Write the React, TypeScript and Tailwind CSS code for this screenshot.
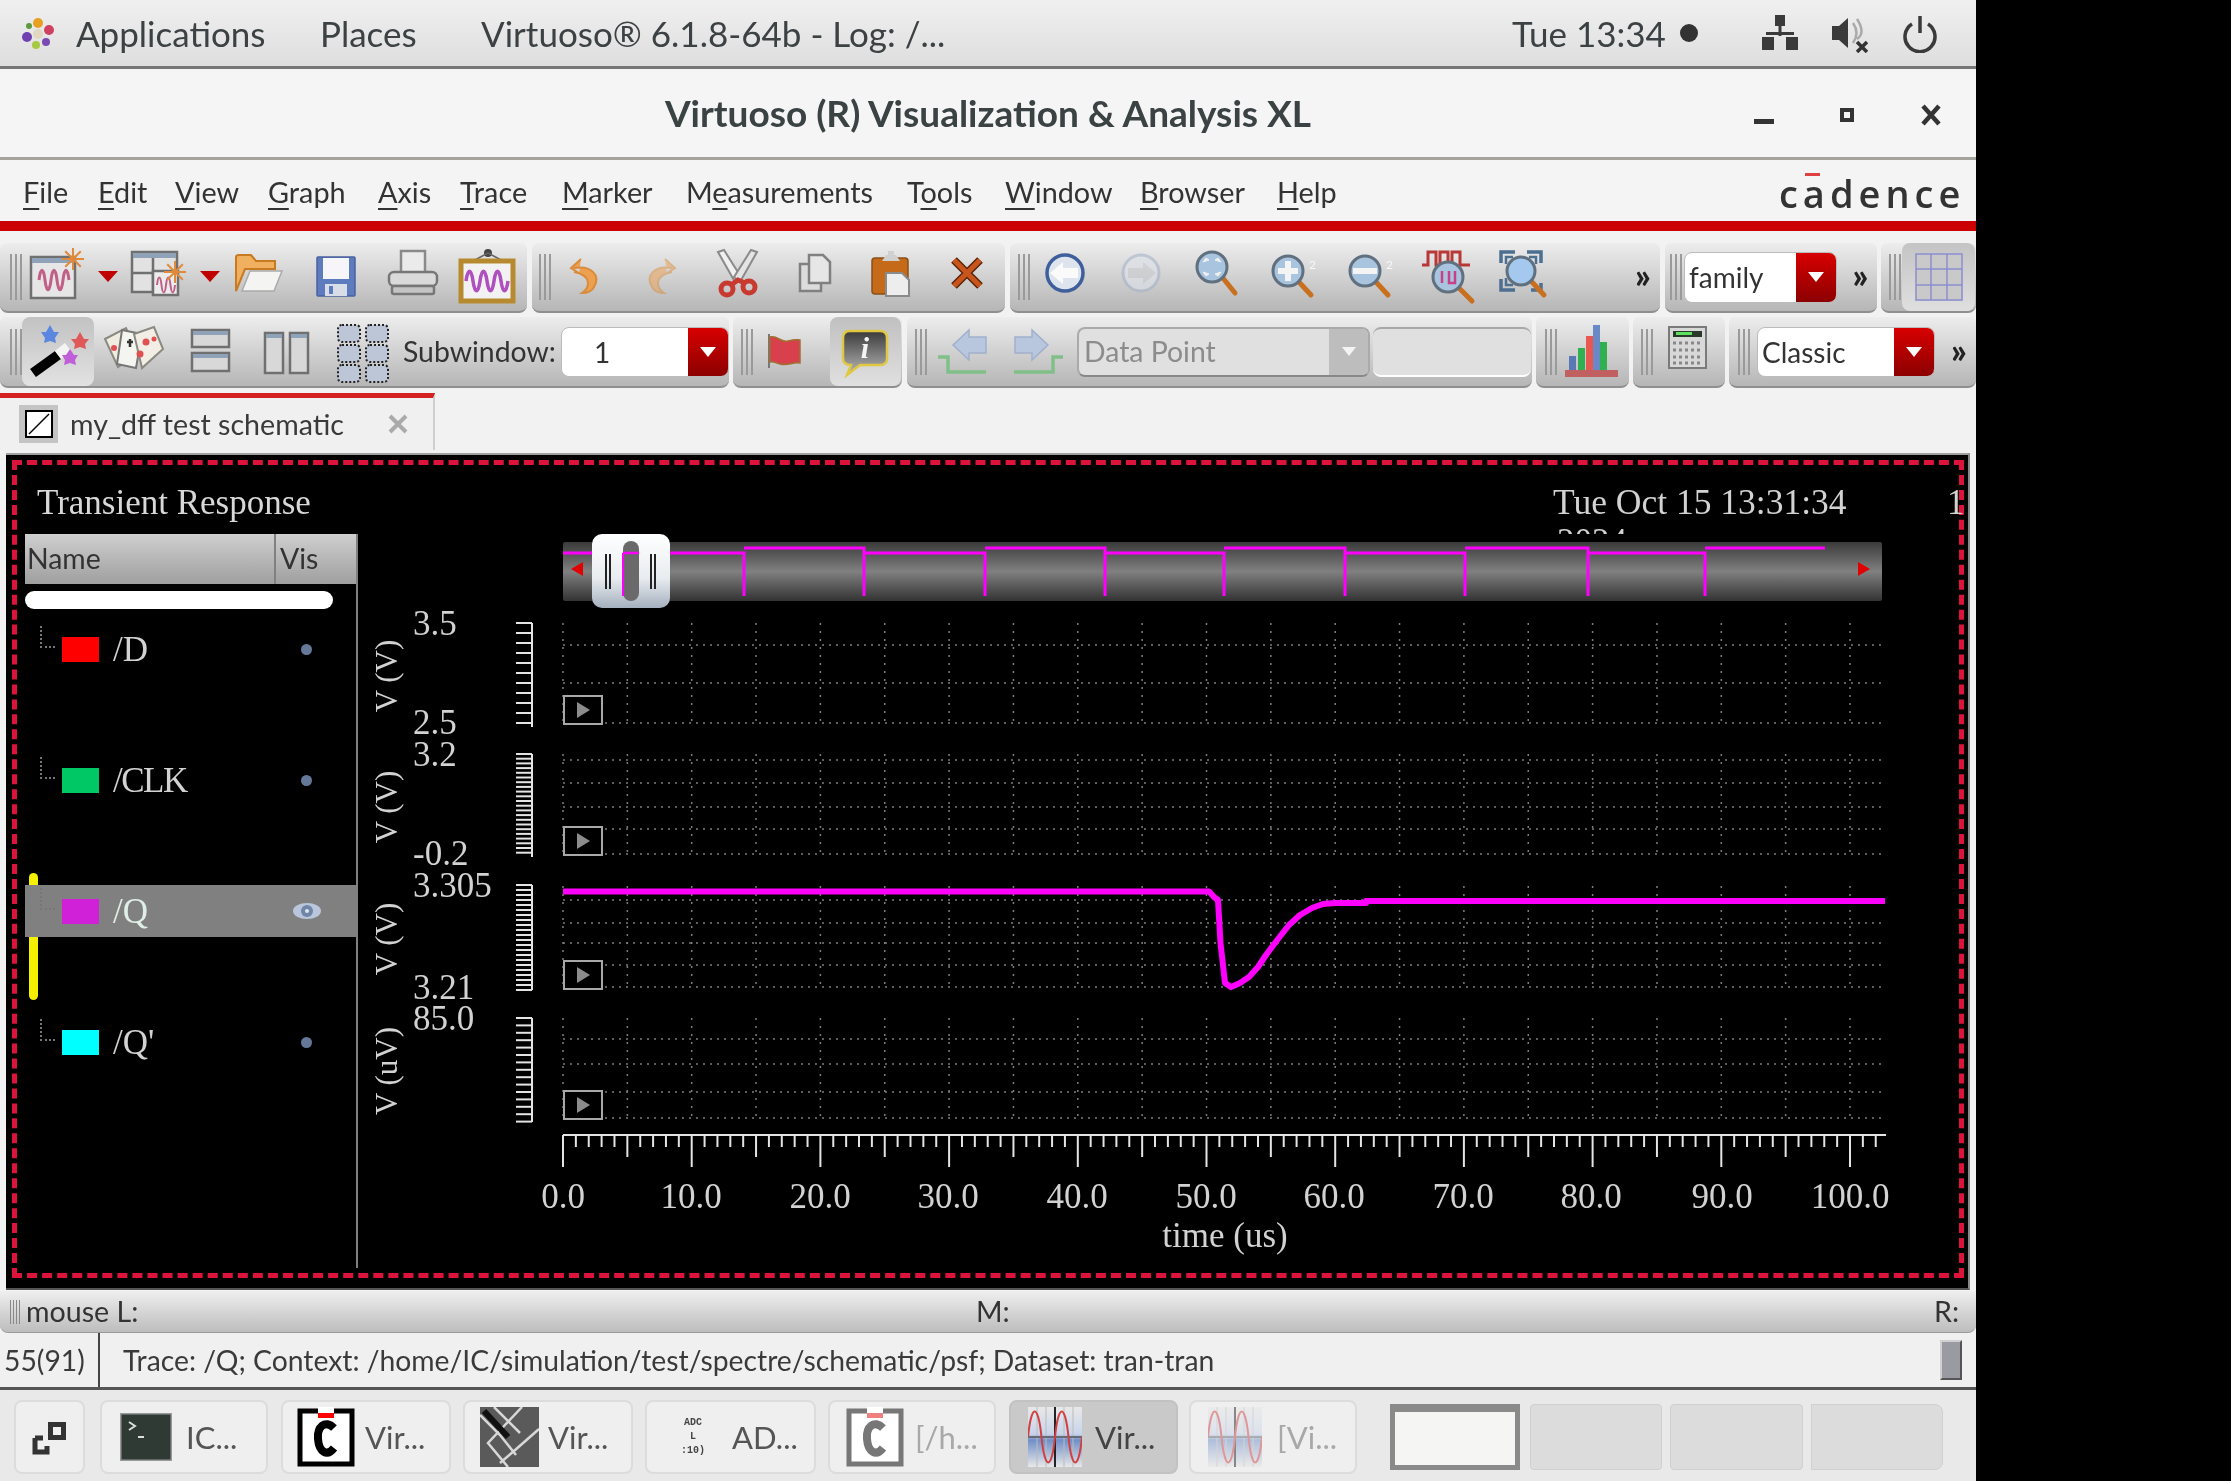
import React from "react";

const wave = (x0: number, y: number, n: number, w: number, a: number) => {
  let d = `M${x0} ${y}`;
  let x = x0;
  for (let i = 0; i < n; i++) {
    const s = i % 2 === 0 ? -1 : 1;
    d += ` C${x + w * 0.25} ${y + s * a} ${x + w * 0.75} ${y + s * a} ${x + w} ${y}`;
    x += w;
  }
  return d;
};

function Ic({ children, cls = "" }: { children?: React.ReactNode; cls?: string }) {
  return (
    <svg viewBox="0 0 48 60" className={`w-12 h-[60px] overflow-visible shrink-0 ${cls}`}>
      {children}
    </svg>
  );
}

function Spark({ x, y }: { x: number; y: number }) {
  const rays = [0, 45, 90, 135, 180, 225, 270, 315];
  return (
    <g stroke="#e08a3c" strokeWidth="2">
      {rays.map((a) => (
        <line key={a} x1={x} y1={y} x2={x + 11 * Math.cos((a * Math.PI) / 180)} y2={y + 11 * Math.sin((a * Math.PI) / 180)} />
      ))}
    </g>
  );
}

const Drop = ({ cls }: { cls: string }) => (
  <Ic cls={cls}>
    <polygon points="14,24 34,24 24,35" fill="#c00000" />
  </Ic>
);

function Mag({ cx, cy, hx, hy, r = 15, fill = "#a9c4de", children }: { cx: number; cy: number; hx: number; hy: number; r?: number; fill?: string; children?: React.ReactNode }) {
  return (
    <>
      <line x1={cx + r * 0.7} y1={cy + r * 0.7} x2={hx} y2={hy} stroke="#c8701f" strokeWidth="5" strokeLinecap="round" />
      <circle cx={cx} cy={cy} r={r} fill={fill} stroke="#60707e" strokeWidth="3" />
      {children}
    </>
  );
}

const Grip = ({ cls = "" }: { cls?: string }) => (
  <div className={`flex gap-[3px] h-[46px] w-[13px] shrink-0 ${cls}`}>
    <div className="w-[2px] h-full bg-[#9a9a9a]" />
    <div className="w-[2px] h-full bg-[#9a9a9a]" />
    <div className="w-[2px] h-full bg-[#9a9a9a]" />
  </div>
);

const Chev = ({ cls }: { cls: string }) => (
  <div className={`text-[34px] font-black leading-none text-[#222] text-center pb-[4px] ${cls}`}>»</div>
);

function Group({ cls, children }: { cls: string; children?: React.ReactNode }) {
  return (
    <div className={`flex items-center shrink-0 rounded-t-md rounded-b-lg border-b-2 border-[#8f8f8f] bg-gradient-to-b from-[#ededed] to-[#b6b6b6] ${cls}`}>
      {children}
    </div>
  );
}

function Combo({ cls, dcls, text, tcls }: { cls: string; dcls: string; text: string; tcls: string }) {
  return (
    <div className={`flex shrink-0 rounded-lg border border-[#bbb] bg-white overflow-hidden ${cls}`}>
      <div className={`flex-1 flex items-center text-[28px] text-[#333] ${tcls}`}>{text}</div>
      <div className={`flex items-center justify-center bg-gradient-to-b from-[#d80000] to-[#8c0000] ${dcls}`}>
        <svg width="16" height="10" viewBox="0 0 16 10">
          <polygon points="0,0 16,0 8,10" fill="#fff" />
        </svg>
      </div>
    </div>
  );
}

function MenuItem({ w, a = "", u, b }: { w: string; a?: string; u: string; b: string }) {
  return (
    <div className={`shrink-0 whitespace-nowrap ${w}`}>
      {a}
      <span className="underline decoration-2 underline-offset-[5px]">{u}</span>
      {b}
    </div>
  );
}

function TaskBtn({ cls, active, children }: { cls: string; active?: boolean; children?: React.ReactNode }) {
  return (
    <div className={`flex items-center h-[74px] shrink-0 rounded-lg border-2 ${active ? "bg-[#c9c9c9] border-[#c2c2c2] text-[#444]" : "bg-[#efefef] border-[#dcdcdc] text-[#555]"} ${cls}`}>
      {children}
    </div>
  );
}

const CDoc = ({ light }: { light?: boolean }) => {
  const c = light ? "#777" : "#000";
  return (
    <svg viewBox="0 0 58 60" className="w-[58px] h-[60px] shrink-0">
      <rect x="3" y="4" width="52" height="53" fill="#fff" stroke={c} strokeWidth="5" />
      <rect x="21" y="0" width="16" height="8" fill="#fff" />
      <rect x="21" y="6" width="16" height="5" fill={light ? "#f08080" : "#f00"} />
      <path d="M37 21 C28 12 20 20 21 32 C22 45 30 50 37 41" fill="none" stroke={c} strokeWidth="8" />
    </svg>
  );
};

const WaveTask = ({ light }: { light?: boolean }) => (
  <svg viewBox="0 0 54 60" className={`w-[54px] h-[60px] shrink-0 ${light ? "opacity-50" : ""}`}>
    <defs>
      <linearGradient id={light ? "wt2" : "wt1"} x1="0" y1="0" x2="0" y2="1">
        <stop offset="0" stopColor="#e8e8e8" />
        <stop offset="0.45" stopColor="#c8d4ec" />
        <stop offset="0.55" stopColor="#6f8fc8" />
        <stop offset="1" stopColor="#e8e8e8" />
      </linearGradient>
    </defs>
    <rect width="54" height="60" fill={`url(#${light ? "wt2" : "wt1"})`} />
    {[9, 18, 36, 45].map((x) => (
      <line key={x} x1={x} x2={x} y1="0" y2="60" stroke="#bbb" />
    ))}
    <line x1="27" x2="27" y1="0" y2="60" stroke="#222" strokeWidth="2" />
    <line x1="0" x2="54" y1="30" y2="30" stroke="#555" strokeWidth="1.5" />
    <path d={wave(0, 30, 4, 13.5, 34)} fill="none" stroke="#d04040" strokeWidth="2" />
  </svg>
);

function Chart() {
  const panels = [
    { t: 623, b: 723, h: [645, 683, 723] },
    { t: 754, b: 854, h: [760, 783, 807, 829, 854] },
    { t: 886, b: 987, h: [900, 923, 943, 965, 987] },
    { t: 1018, b: 1118, h: [1039, 1064, 1092, 1118] },
  ];
  const rulers = [
    { t: 623, b: 727, s: 10 },
    { t: 754, b: 857, s: 4.7 },
    { t: 885, b: 990, s: 5 },
    { t: 1018, b: 1122, s: 7.4 },
  ];
  const edges = [744, 864, 985, 1105, 1224, 1345, 1465, 1588, 1705, 1825];
  let trace = "M563 553 H744 V596";
  edges.forEach((x, i) => {
    if (i === edges.length - 1) return;
    const y = i % 2 === 0 ? 548 : 553;
    trace += ` M${x} ${y} H${edges[i + 1]}`;
    if (i < edges.length - 2) trace += " V596";
  });
  const serif = "'Liberation Serif', serif";
  const tx = { fill: "#d2d2d2", fontFamily: serif, fontSize: 35 };
  const nums: [string, number][] = [
    ["3.5", 635],
    ["2.5", 734],
    ["3.2", 766],
    ["-0.2", 865],
    ["3.305", 897],
    ["3.21", 999],
    ["85.0", 1030],
  ];
  const xl: [string, number][] = [
    ["0.0", 563],
    ["10.0", 691],
    ["20.0", 820],
    ["30.0", 948],
    ["40.0", 1077],
    ["50.0", 1206],
    ["60.0", 1334],
    ["70.0", 1463],
    ["80.0", 1591],
    ["90.0", 1722],
    ["100.0", 1850],
  ];
  return (
    <svg viewBox="358 465 1601 808" className="w-[1601px] h-[808px] shrink-0 overflow-visible">
      <defs>
        <linearGradient id="ov" x1="0" y1="0" x2="0" y2="1">
          <stop offset="0" stopColor="#3a3a3a" />
          <stop offset="0.5" stopColor="#808080" />
          <stop offset="1" stopColor="#333" />
        </linearGradient>
        <linearGradient id="hd" x1="0" y1="0" x2="0" y2="1">
          <stop offset="0" stopColor="#ffffff" />
          <stop offset="0.6" stopColor="#e8ecf0" />
          <stop offset="1" stopColor="#a4b0be" />
        </linearGradient>
        <clipPath id="yr">
          <rect x="1500" y="465" width="400" height="69" />
        </clipPath>
      </defs>

      <text x="1553" y="514" {...tx} fontSize="35.5">Tue Oct 15 13:31:34</text>
      <text x="1557" y="553" {...tx} clipPath="url(#yr)">2024</text>
      <text x="1947" y="514" {...tx}>1</text>

      <rect x="563" y="542" width="1319" height="59" rx="2" fill="url(#ov)" />
      <path d={trace} fill="none" stroke="#ff00ff" strokeWidth="3" />
      <polygon points="571,569 583,562 583,576" fill="#e00000" />
      <polygon points="1870,569 1858,562 1858,576" fill="#e00000" />
      <rect x="592" y="534" width="78" height="74" rx="10" fill="url(#hd)" />
      <rect x="623" y="541" width="16" height="60" rx="8" fill="#6a6a6a" />
      <line x1="623" x2="639" y1="553" y2="553" stroke="#ff00ff" strokeWidth="2.5" />
      <line x1="623" x2="623" y1="553" y2="596" stroke="#ff00ff" strokeWidth="2" />
      {[606, 610, 651, 655].map((x) => (
        <line key={x} x1={x} x2={x} y1="554" y2="589" stroke="#222" strokeWidth="2" />
      ))}

      {panels.map((p) => (
        <g key={p.t} stroke="#7c7c7c" strokeWidth="1.5">
          {Array.from({ length: 21 }, (_, i) => 563 + 64.35 * i).map((x) => (
            <line key={x} x1={x} x2={x} y1={p.t} y2={p.b} strokeDasharray="2 6" />
          ))}
          {p.h.map((y) => (
            <line key={y} x1="563" x2="1885" y1={y} y2={y} strokeDasharray="2 5" />
          ))}
        </g>
      ))}

      {rulers.map((r) => (
        <g key={r.t} stroke="#e4e4e4" strokeWidth="2">
          <line x1="532" x2="532" y1={r.t} y2={r.b} />
          {Array.from({ length: Math.floor((r.b - r.t) / r.s) + 1 }, (_, i) => r.t + i * r.s).map((y) => (
            <line key={y} x1="516" x2="532" y1={y} y2={y} />
          ))}
        </g>
      ))}

      {[696, 827, 961, 1091].map((y) => (
        <g key={y}>
          <rect x="564" y={y} width="38" height="28" fill="#000" stroke="#a8a8a8" strokeWidth="2" />
          <polygon points={`577,${y + 6} 590,${y + 14} 577,${y + 22}`} fill="#8c8c8c" />
        </g>
      ))}

      <polyline
        points="563,891.5 1209,891.5 1214,897 1218,900 1220.5,943 1225,983 1231,987 1240,983 1249,977 1258,967 1266,955 1278,939 1289,925 1300,915 1312,908 1323,904 1335,903 1366,903 1366,901 1885,901"
        fill="none"
        stroke="#ff00ff"
        strokeWidth="6"
        strokeLinejoin="round"
      />

      <g stroke="#e4e4e4" strokeWidth="2">
        <line x1="563" x2="1886" y1="1135" y2="1135" />
        {Array.from({ length: 103 }, (_, i) => i).map((i) => (
          <line key={i} x1={563 + 12.87 * i} x2={563 + 12.87 * i} y1="1135" y2={i % 10 === 0 ? 1167 : i % 5 === 0 ? 1157 : 1147} />
        ))}
      </g>

      {nums.map(([t, y]) => (
        <text key={t} x="413" y={y} {...tx}>{t}</text>
      ))}
      {xl.map(([t, x]) => (
        <text key={t} x={x} y="1208" textAnchor="middle" {...tx}>{t}</text>
      ))}
      <text x="1225" y="1247" textAnchor="middle" {...tx}>time (us)</text>

      {[
        ["V (V)", 676],
        ["V (V)", 807],
        ["V (V)", 939],
        ["V (uV)", 1071],
      ].map(([t, y]) => (
        <text key={String(y)} x="0" y="0" textAnchor="middle" transform={`translate(397 ${y}) rotate(-90)`} fill="#d2d2d2" fontFamily={serif} fontSize="31">
          {t}
        </text>
      ))}
    </svg>
  );
}

function Row({ color, label, active, eye, cls = "" }: { color: string; label: string; active?: boolean; eye?: boolean; cls?: string }) {
  return (
    <div className={`relative flex h-[52px] mb-[79px] ${active ? "bg-[#808080]" : ""}`}>
      <div className="self-start mt-[3px] ml-[15px] w-[15px] h-[22px] border-l-2 border-b-2 border-dotted border-[#777]" />
      <div className="self-center ml-[7px] w-[37px] h-[25px] shrink-0" style={{ backgroundColor: color }} />
      <div className={`self-center ml-[14px] text-[35px] leading-none ${active ? "text-[#dfeee6]" : "text-[#d2d2d2]"} ${cls}`}>{label}</div>
      {eye ? (
        <svg viewBox="0 0 30 20" className="self-center ml-auto mr-[34px] w-[30px] h-[20px]">
          <ellipse cx="15" cy="10" rx="14" ry="8" fill="#b9c6dc" />
          <circle cx="15" cy="10" r="6" fill="#6f86a8" />
          <circle cx="15" cy="10" r="2" fill="#dfe6f0" />
        </svg>
      ) : (
        <div className="self-center ml-auto mr-[44px] w-[11px] h-[11px] rounded-full bg-[#66789a]" />
      )}
    </div>
  );
}

export default function App() {
  return (
    <div className="w-[2231px] h-[1481px] bg-black flex overflow-hidden blur-[0.7px] font-['Lato',sans-serif]">
      <div className="w-[1976px] h-[1481px] bg-[#f2f2f2] flex flex-col text-[#2e3436] shrink-0">
        {/* system bar */}
        <div className="h-[69px] shrink-0 flex items-center pl-[22px] border-b-[3px] border-[#777] bg-gradient-to-b from-[#f0f0f0] to-[#dedede] text-[35px] text-[#3c4244]">
          <svg viewBox="0 0 33 33" className="w-[33px] h-[33px] shrink-0">
            <circle cx="16" cy="6" r="5" fill="#e8a020" />
            <circle cx="27" cy="13" r="5" fill="#d04060" />
            <circle cx="24" cy="25" r="4" fill="#7a4ab0" />
            <circle cx="14" cy="28" r="4" fill="#a8c840" />
            <circle cx="5" cy="20" r="5" fill="#7040b0" />
            <circle cx="7" cy="9" r="3" fill="#5a9a40" />
            <circle cx="16" cy="17" r="5" fill="#e0d8c0" />
          </svg>
          <div className="ml-[21px] w-[244px] shrink-0">Applications</div>
          <div className="w-[161px] shrink-0">Places</div>
          <div className="w-[1031px] shrink-0 whitespace-nowrap">Virtuoso® 6.1.8-64b - Log: /...</div>
          <div className="whitespace-nowrap w-[168px] shrink-0">Tue 13:34</div>
          <div className="w-[18px] h-[18px] rounded-full bg-[#333] shrink-0" />
          <svg viewBox="0 0 40 40" className="ml-[62px] w-[40px] h-[40px] shrink-0" fill="#3a3a3a">
            <rect x="15" y="2" width="10" height="11" />
            <rect x="18.5" y="13" width="3" height="10" />
            <rect x="6" y="19" width="28" height="3" />
            <rect x="2" y="24" width="12" height="13" />
            <rect x="26" y="24" width="12" height="13" />
          </svg>
          <svg viewBox="0 0 40 40" className="ml-[30px] w-[40px] h-[40px] shrink-0">
            <polygon points="2,13 9,13 18,5 18,35 9,27 2,27" fill="#3a3a3a" />
            <path d="M23 10 Q30 20 23 30 M27 6 Q36 20 27 26" fill="none" stroke="#aaa" strokeWidth="2.5" />
            <path d="M27 29 L37 39 M37 29 L27 39" stroke="#333" strokeWidth="3.5" />
          </svg>
          <svg viewBox="0 0 40 40" className="ml-[30px] w-[40px] h-[40px] shrink-0" fill="none" stroke="#3a3a3a" strokeWidth="3.5">
            <path d="M12 11 A15 15 0 1 0 28 11" />
            <line x1="20" y1="3" x2="20" y2="20" />
          </svg>
        </div>

        {/* title bar */}
        <div className="relative h-[91px] shrink-0 flex items-center justify-center border-b-[3px] border-[#a4a49c] bg-[#f5f5f5]">
          <div className="text-[37px] font-bold text-[#3a4244]">Virtuoso (R) Visualization &amp; Analysis XL</div>
          <div className="absolute left-[1754px] top-[50px] w-[20px] h-[5px] bg-[#333]" />
          <div className="absolute left-[1840px] top-[39px] w-[14px] h-[14px] border-[4px] border-[#333]" />
          <svg viewBox="0 0 20 22" className="absolute left-[1921px] top-[35px] w-[20px] h-[22px]">
            <path d="M2 2 L18 20 M18 2 L2 20" stroke="#333" strokeWidth="4.5" />
          </svg>
        </div>

        {/* menu */}
        <div className="h-[61px] shrink-0 flex items-center pl-[23px] pt-[4px] bg-[#f4f4f4] text-[28.8px] text-[#333]">
          <MenuItem w="w-[75px]" u="F" b="ile" />
          <MenuItem w="w-[77px]" u="E" b="dit" />
          <MenuItem w="w-[93px]" u="V" b="iew" />
          <MenuItem w="w-[110px]" u="G" b="raph" />
          <MenuItem w="w-[82px]" u="A" b="xis" />
          <MenuItem w="w-[102px]" u="T" b="race" />
          <MenuItem w="w-[124px]" u="M" b="arker" />
          <MenuItem w="w-[221px]" a="M" u="e" b="asurements" />
          <MenuItem w="w-[98px]" a="T" u="o" b="ols" />
          <MenuItem w="w-[135px]" u="W" b="indow" />
          <MenuItem w="w-[137px]" u="B" b="rowser" />
          <MenuItem w="w-[502px]" u="H" b="elp" />
          <div className="relative w-[182px] text-[38px] font-semibold leading-none tracking-[5px] text-[#333] font-['Open_Sans',sans-serif]">
            cadence
            <div className="absolute left-[26px] top-[-1px] w-[15px] h-[3px] bg-[#e04040]" />
          </div>
        </div>
        <div className="h-[10px] shrink-0 bg-[#cc0000]" />

        {/* toolbar 1 */}
        <div className="mt-[12px] h-[70px] shrink-0 flex">
          <Group cls="w-[527px]">
            <Grip cls="ml-[10px]" />
            <Ic cls="ml-[7px]">
              <rect x="1" y="10" width="44" height="41" fill="#e6e6e6" stroke="#707070" strokeWidth="2.5" />
              <rect x="2" y="11" width="42" height="5" fill="#8fa2b8" />
              <path d={wave(9, 33, 5, 6, 13)} fill="none" stroke="#c06088" strokeWidth="3" />
              <Spark x={43} y={12} />
            </Ic>
            <Drop cls="ml-[6px]" />
            <Ic>
              <rect x="0" y="5" width="45" height="40" fill="#e2e2e2" stroke="#707070" strokeWidth="2.5" />
              <rect x="1" y="6" width="43" height="5" fill="#8fa2b8" />
              <path d="M21 11 V45 M0 26 H21" stroke="#707070" strokeWidth="2.5" />
              <rect x="21" y="24" width="25" height="24" fill="#ececec" stroke="#707070" strokeWidth="2.5" />
              <path d={wave(25, 38, 4, 4.5, 10)} fill="none" stroke="#c06088" strokeWidth="2" />
              <Spark x={43} y={25} />
            </Ic>
            <Drop cls="ml-[6px]" />
            <Ic cls="ml-[-1px]">
              <path d="M3 44 V10 Q3 8 6 8 H18 L23 14 H42 V22 H12 Z" fill="#f0b060" stroke="#c87a20" strokeWidth="2" />
              <polygon points="9,44 17,24 49,24 41,44" fill="#f4f4f2" stroke="#aaa" strokeWidth="1.5" />
            </Ic>
            <Ic cls="ml-[31px]">
              <rect x="5" y="10" width="38" height="39" rx="1" fill="#5d7cc0" stroke="#4a629e" strokeWidth="1.5" />
              <rect x="11" y="11" width="26" height="21" fill="#f6f6fa" />
              <rect x="13" y="37" width="22" height="12" fill="#d8dde8" />
              <rect x="17" y="39" width="4" height="8" fill="#5d7cc0" />
            </Ic>
            <Ic cls="ml-[29px]">
              <rect x="12" y="4" width="24" height="24" fill="#ebebeb" stroke="#8a8a8a" strokeWidth="2.5" />
              <rect x="0" y="25" width="48" height="14" rx="5" fill="#dadada" stroke="#777" strokeWidth="2.5" />
              <rect x="3" y="39" width="42" height="8" rx="2" fill="#c4c4c4" stroke="#777" strokeWidth="2.5" />
            </Ic>
            <Ic cls="ml-[26px]">
              <circle cx="25" cy="6" r="4" fill="#444" />
              <path d="M25 6 L10 14 M25 6 L40 14" stroke="#666" strokeWidth="1.5" />
              <rect x="-2" y="14" width="52" height="40" fill="#f2f2f2" stroke="#b88a30" strokeWidth="5" />
              <path d={wave(3, 34, 6, 7, 13)} fill="none" stroke="#b050c0" strokeWidth="3.5" />
            </Ic>
          </Group>
          <Group cls="ml-[5px] w-[473px]">
            <Grip cls="ml-[7px]" />
            <Ic cls="ml-[9px]">
              <path d="M20 12 L10 21 L18 26 M13 21 C30 18 40 28 33 40 C31 44 27 46 21 46 C30 40 30 28 13 25" fill="#eda050" stroke="#d88c3c" strokeWidth="2" />
            </Ic>
            <Ic cls="ml-[28px] scale-x-[-1] opacity-50">
              <path d="M20 12 L10 21 L18 26 M13 21 C30 18 40 28 33 40 C31 44 27 46 21 46 C30 40 30 28 13 25" fill="#eda050" stroke="#d88c3c" strokeWidth="2" />
            </Ic>
            <Ic cls="ml-[29px]">
              <polygon points="4,5 10,3 27,30 21,35" fill="#f0f0f0" stroke="#8a8a8a" strokeWidth="2" />
              <polygon points="43,5 37,3 20,30 26,35" fill="#e4e4e4" stroke="#8a8a8a" strokeWidth="2" />
              <circle cx="13" cy="42" r="6" fill="none" stroke="#c83a30" strokeWidth="5" />
              <circle cx="35" cy="40" r="6" fill="none" stroke="#c83a30" strokeWidth="5" />
              <path d="M17 38 L24 33 L31 36" fill="none" stroke="#c83a30" strokeWidth="5" />
            </Ic>
            <Ic cls="ml-[29px]">
              <rect x="9" y="17" width="21" height="27" fill="#dcdcdc" stroke="#808080" strokeWidth="2.5" />
              <path d="M18 8 H32 L39 15 V36 H18 Z" fill="#e6e6e6" stroke="#808080" strokeWidth="2.5" />
            </Ic>
            <Ic cls="ml-[27px]">
              <rect x="6" y="11" width="36" height="36" rx="3" fill="#c46a18" stroke="#8a5018" strokeWidth="1.5" />
              <path d="M16 14 L20 8 H22 V4 H28 V8 H30 L34 14 Z" fill="#d0d0d0" />
              <path d="M20 26 H36 L43 33 V49 H20 Z" fill="#ededed" stroke="#8a8a8a" strokeWidth="2" />
            </Ic>
            <Ic cls="ml-[28px]">
              <path d="M12 13 L38 39 M38 13 L12 39" stroke="#5a2408" strokeWidth="8" />
              <path d="M12 13 L38 39 M38 13 L12 39" stroke="#c8561c" strokeWidth="5" />
            </Ic>
          </Group>
          <Group cls="ml-[5px] w-[650px]">
            <Grip cls="ml-[8px]" />
            <Ic cls="ml-[10px]">
              <circle cx="24" cy="26" r="18" fill="#dde4ee" stroke="#3f5f9c" strokeWidth="3.5" />
              <polygon points="9,26 22,15 22,21 37,21 37,31 22,31 22,37" fill="#fafafa" />
            </Ic>
            <Ic cls="ml-[27px] opacity-60">
              <circle cx="25" cy="26" r="18" fill="#dde2ea" stroke="#a8b4ca" strokeWidth="3" />
              <polygon points="40,26 27,15 27,21 12,21 12,31 27,31 27,37" fill="#c9ccd0" />
            </Ic>
            <Ic cls="ml-[29px]">
              <Mag cx={19} cy={20} hx={42} hy={46} r={15}>
                <path d="M10 15 L13 11 L16 13 Z M28 15 L25 11 L22 13 Z M10 25 L13 29 L16 27 Z M28 25 L25 29 L22 27 Z" fill="#f0f0f0" stroke="#f0f0f0" />
              </Mag>
            </Ic>
            <Ic cls="ml-[28px]">
              <Mag cx={19} cy={24} hx={42} hy={48}>
                <path d="M19 14 V34 M9 24 H29" stroke="#f4f4f4" strokeWidth="6" />
              </Mag>
              <text x="40" y="22" fontSize="12" fill="#f8f8f8" fontFamily="Lato">2</text>
            </Ic>
            <Ic cls="ml-[29px]">
              <Mag cx={19} cy={24} hx={42} hy={48}>
                <path d="M7 24 H31" stroke="#f4f4f4" strokeWidth="6" />
              </Mag>
              <text x="40" y="22" fontSize="12" fill="#f8f8f8" fontFamily="Lato">2</text>
            </Ic>
            <Ic cls="ml-[32px]">
              <path d="M-4 18 H2 V5 H10 V18 H14 V5 H22 V18 H26 V5 H34 V18 H44" fill="none" stroke="#b83838" strokeWidth="3" />
              <Mag cx={22} cy={30} hx={46} hy={54} r={15}>
                <path d="M16 36 V24 M23 24 V36 H29 V24" fill="none" stroke="#c84088" strokeWidth="2.5" />
              </Mag>
            </Ic>
            <Ic cls="ml-[25px]">
              <path d="M2 16 V5 H16 M28 5 H42 V16 M2 32 V43 H16 M42 36 V43 H32" fill="none" stroke="#4d6f90" strokeWidth="3.5" />
              <path d="M7 17 V10 H14 M30 10 H37 V17 M7 31 V38 H14" fill="none" stroke="#4d6f90" strokeWidth="2.5" />
              <Mag cx={22} cy={24} hx={45} hy={48} r={14} fill="#a4c8ee" />
            </Ic>
            <Chev cls="ml-[79px] w-12" />
          </Group>
          <Group cls="ml-[5px] w-[212px]">
            <Grip cls="ml-[5px]" />
            <Combo cls="ml-[1px] w-[153px] h-[51px]" dcls="w-[40px]" text="family" tcls="pl-[4px]" />
            <Chev cls="ml-[7px] w-12" />
          </Group>
          <Group cls="ml-[4px] w-[95px]">
            <Grip cls="ml-[8px]" />
            <div className="flex items-center justify-center w-[73px] h-full rounded-lg bg-gradient-to-b from-[#c4c4c4] to-[#dfdfdf]">
              <svg viewBox="0 0 48 48" className="w-[48px] h-[48px]">
                <rect width="48" height="48" fill="#c9c9c9" />
                <path d="M1 1 H47 V47 H1 Z M16 1 V47 M32 1 V47 M1 16 H47 M1 32 H47" fill="none" stroke="#8a8ed0" strokeWidth="1.5" />
              </svg>
            </div>
          </Group>
        </div>

        {/* toolbar 2 */}
        <div className="mt-[4px] h-[71px] shrink-0 flex">
          <Group cls="w-[729px]">
            <Grip cls="ml-[10px]" />
            <div className="w-[72px] h-[69px] shrink-0 rounded-lg bg-gradient-to-b from-[#c2c2c2] to-[#e2e2e2] -ml-[1px]">
              <svg viewBox="0 0 72 69" className="w-[72px] h-[69px]">
                <line x1="11" y1="56" x2="36" y2="38" stroke="#000" strokeWidth="10" />
                <line x1="36" y1="38" x2="46" y2="30" stroke="#f4f4f4" strokeWidth="10" />
                <polygon points="28,8 32,15 37,15 33,21 34,26 28,24 22,26 23,21 19,15 24,15" fill="#5a88e0" />
                <polygon points="58,15 62,22 67,22 63,27 64,32 58,30 52,32 53,27 49,22 54,22" fill="#e05858" />
                <polygon points="48,32 52,38 56,38 53,43 54,48 48,46 42,48 43,43 40,38 44,38" fill="#c060d8" />
              </svg>
            </div>
            <Ic cls="ml-[14px]">
              <polygon points="-3,17 18,6 30,32 10,45" fill="#f0ece0" stroke="#8a8a80" strokeWidth="2" />
              <polygon points="14,8 34,12 28,46 9,42" fill="#f4f4f0" stroke="#777" strokeWidth="2" />
              <polygon points="26,12 46,5 55,27 34,46" fill="#f2eee6" stroke="#8a8a80" strokeWidth="2" />
              <path d="M19 20 H25 M22 17 V25" stroke="#333" strokeWidth="2.5" />
              <circle cx="6" cy="26" r="3" fill="#e05050" />
              <circle cx="38" cy="20" r="3.5" fill="#e05050" />
              <circle cx="32" cy="32" r="3.5" fill="#e05050" />
              <circle cx="46" cy="17" r="2.5" fill="#e05050" />
            </Ic>
            <Ic cls="ml-[30px]">
              <rect x="6" y="8" width="37" height="17" fill="#d8d8d8" stroke="#707070" strokeWidth="2.5" />
              <rect x="7" y="9" width="35" height="4" fill="#8fa2b8" />
              <rect x="6" y="31" width="37" height="18" fill="#d8d8d8" stroke="#707070" strokeWidth="2.5" />
              <rect x="7" y="32" width="35" height="4" fill="#8fa2b8" />
            </Ic>
            <Ic cls="ml-[28px]">
              <rect x="3" y="11" width="18" height="40" fill="#d8d8d8" stroke="#707070" strokeWidth="2.5" />
              <rect x="4" y="12" width="16" height="4" fill="#8fa2b8" />
              <rect x="28" y="11" width="18" height="40" fill="#d8d8d8" stroke="#707070" strokeWidth="2.5" />
              <rect x="29" y="12" width="16" height="4" fill="#8fa2b8" />
            </Ic>
            <Ic cls="ml-[29px]">
              {[3, 23, 43].map((y) =>
                [-1, 27].map((x) => (
                  <rect key={`${x}${y}`} x={x} y={y} width="22" height="17" rx="4" fill="#bcc6d6" stroke="#222" strokeWidth="2" strokeDasharray="2 2" />
                )),
              )}
            </Ic>
            <div className="ml-[16px] w-[152px] shrink-0 text-[28.4px] text-[#333] whitespace-nowrap">Subwindow:</div>
            <Combo cls="ml-[6px] w-[168px] h-[50px]" dcls="w-[40px]" text="1" tcls="pl-[32px]" />
          </Group>
          <Group cls="ml-[4px] w-[169px]">
            <Grip cls="ml-[8px]" />
            <Ic cls="ml-[6px]">
              <line x1="9" y1="12" x2="9" y2="46" stroke="#777" strokeWidth="2" />
              <path d="M10 15 C18 13 20 21 28 19 C32 18 36 17 40 18 V41 C32 40 28 44 20 42 C16 41 13 39 10 40 Z" fill="#d8404c" stroke="#a07030" strokeWidth="1.5" />
            </Ic>
            <div className="ml-[22px] w-[71px] h-[69px] shrink-0 rounded-lg bg-gradient-to-b from-[#c0c0c0] to-[#e0e0e0]">
              <svg viewBox="0 0 71 69" className="w-[71px] h-[69px]">
                <defs>
                  <linearGradient id="ib" x1="0" y1="0" x2="0" y2="1">
                    <stop offset="0" stopColor="#3a3a3a" />
                    <stop offset="1" stopColor="#b8b8b8" />
                  </linearGradient>
                </defs>
                <path d="M20 14 H50 Q57 14 57 21 V41 Q57 48 50 48 H30 L17 58 L21 48 Q13 48 13 41 V21 Q13 14 20 14 Z" fill="url(#ib)" stroke="#e0c840" strokeWidth="2.5" />
                <text x="35" y="41" textAnchor="middle" fontSize="30" fontWeight="700" fontStyle="italic" fill="#f4f4f4" fontFamily="'Liberation Serif', serif">i</text>
              </svg>
            </div>
          </Group>
          <Group cls="ml-[5px] w-[625px]">
            <Grip cls="ml-[8px]" />
            <Ic cls="ml-[11px]">
              <polygon points="14,23 30,8 30,15 47,15 47,31 30,31 30,38" fill="#b8c6de" stroke="#a0b0cc" strokeWidth="1.5" />
              <path d="M-1 35 H9 V50 H47" fill="none" stroke="#80c088" strokeWidth="3.5" />
            </Ic>
            <Ic cls="ml-[25px]">
              <polygon points="36,23 20,8 20,15 3,15 3,31 20,31 20,38" fill="#b8c6de" stroke="#a0b0cc" strokeWidth="1.5" />
              <path d="M2 50 H41 V35 H51" fill="none" stroke="#80c088" strokeWidth="3.5" />
            </Ic>
            <div className="ml-[17px] w-[293px] h-[50px] shrink-0 flex rounded-lg border-2 border-[#aaa] border-b-[#888] bg-[#e0e0e0] overflow-hidden">
              <div className="flex-1 flex items-center pl-[5px] text-[28.4px] text-[#8c8c8c]">Data Point</div>
              <div className="w-[39px] flex items-center justify-center bg-[#bdbdbd]">
                <svg width="14" height="9" viewBox="0 0 14 9">
                  <polygon points="0,0 14,0 7,9" fill="#f4f4f4" />
                </svg>
              </div>
            </div>
            <div className="ml-[3px] w-[158px] h-[50px] shrink-0 rounded-lg bg-[#e0e0e0] border-t-2 border-[#a8a8a8] border-b-2 border-b-white" />
          </Group>
          <Group cls="ml-[4px] w-[93px]">
            <Grip cls="ml-[9px]" />
            <Ic cls="ml-[9px]">
              <rect x="-2" y="48" width="53" height="7" fill="#c06060" />
              <rect x="2" y="34" width="7" height="14" fill="#5878b8" />
              <rect x="11" y="26" width="7" height="22" fill="#30b050" />
              <rect x="19" y="14" width="7" height="34" fill="#e85850" />
              <rect x="26" y="3" width="7" height="45" fill="#6888c8" />
              <rect x="33" y="20" width="7" height="28" fill="#30b050" />
            </Ic>
          </Group>
          <Group cls="ml-[4px] w-[92px]">
            <Grip cls="ml-[8px]" />
            <Ic cls="ml-[9px]">
              <rect x="6" y="5" width="37" height="41" fill="#d8d8d8" stroke="#7a7a7a" strokeWidth="2" />
              <rect x="10" y="9" width="29" height="6" fill="#2a3a28" />
              <rect x="13" y="10" width="16" height="3" fill="#60e060" />
              <g stroke="#888" strokeWidth="3" strokeDasharray="3 3">
                <line x1="10" x2="40" y1="21" y2="21" />
                <line x1="10" x2="40" y1="28" y2="28" />
                <line x1="10" x2="40" y1="35" y2="35" />
                <line x1="10" x2="40" y1="41" y2="41" />
              </g>
            </Ic>
          </Group>
          <Group cls="ml-[4px] w-[247px]">
            <Grip cls="ml-[9px]" />
            <Combo cls="ml-[6px] w-[178px] h-[50px]" dcls="w-[40px]" text="Classic" tcls="pl-[4px]" />
            <Chev cls="ml-[12px] w-[24px]" />
          </Group>
        </div>

        {/* tab */}
        <div className="mt-[5px] h-[57px] shrink-0 flex">
          <div className="w-[435px] h-full border-t-[5px] border-[#d42020] border-r-2 border-r-[#cfcfcf] flex items-center pl-[19px] text-[28.6px] text-[#3a3a3a] bg-[#f0f0f0]">
            <div className="w-[39px] h-[38px] shrink-0 bg-[#c4c4c4] flex items-center justify-center">
              <svg viewBox="0 0 28 28" className="w-[28px] h-[28px]">
                <rect x="1" y="1" width="26" height="26" fill="#fff" stroke="#000" strokeWidth="2" />
                <line x1="4" y1="24" x2="24" y2="4" stroke="#000" strokeWidth="1.5" />
              </svg>
            </div>
            <div className="ml-[12px] w-[318px] shrink-0 whitespace-nowrap">my_dff test schematic</div>
            <svg viewBox="0 0 20 20" className="w-[20px] h-[20px] shrink-0">
              <path d="M2 2 L18 18 M18 2 L2 18" stroke="#aaa" strokeWidth="4" />
            </svg>
          </div>
        </div>

        {/* canvas */}
        <div className="mt-[3px] ml-[6px] w-[1964px] h-[837px] shrink-0 bg-black border-t-2 border-r-2 border-b-2 border-t-[#a0a0a0] border-r-[#888] border-b-[#555] pt-[5px] pl-[6px]">
          <div className="w-[1952px] h-[818px] border-[5px] border-dashed border-[#dc143c] flex">
            <div className="relative w-[341px] shrink-0 pl-[8px] font-['Liberation_Serif',serif]">
              <div className="h-[69px] pt-[8px] pl-[12px] flex items-center text-[35px] text-[#d8d8d8]">Transient Response</div>
              <div className="relative w-[333px] h-[734px] border-r-2 border-[#808080]">
                <div className="flex h-[50px] bg-gradient-to-b from-[#cfcfcf] to-[#9f9f9f] text-[28.4px] leading-none text-[#333] font-['Lato',sans-serif]">
                  <div className="w-[251px] flex items-center pl-[2px] pb-[2px] border-r-2 border-[#808080]">Name</div>
                  <div className="flex items-center pl-[4px] pb-[2px]">Vis</div>
                </div>
                <div className="mt-[7px] mb-[14px] w-[308px] h-[18px] rounded-full bg-white" />
                <div className="absolute left-[4px] top-[339px] w-[9px] h-[127px] rounded-full bg-[#f5f000]" />
                <Row color="#ff0000" label="/D" />
                <Row color="#00c864" label="/CLK" cls="tracking-[-1.5px]" />
                <Row color="#d020d8" label="/Q" active eye />
                <Row color="#00ffff" label="/Q'" />
              </div>
            </div>
            <Chart />
          </div>
        </div>

        {/* mouse bar */}
        <div className="mt-[1px] h-[42px] shrink-0 flex items-center rounded-b-lg bg-gradient-to-b from-[#efefef] to-[#bdbdbd] border-b border-[#999] text-[28.6px] text-[#333]">
          <div className="ml-[10px] flex gap-[2px] h-[24px] w-[16px] shrink-0">
            <div className="w-[1px] h-full bg-[#888]" />
            <div className="w-[1px] h-full bg-[#888]" />
            <div className="w-[1px] h-full bg-[#888]" />
            <div className="w-[1px] h-full bg-[#888]" />
          </div>
          <div className="w-[950px] shrink-0">mouse L:</div>
          <div className="w-[958px] shrink-0">M:</div>
          <div>R:</div>
        </div>

        {/* status */}
        <div className="h-[57px] shrink-0 flex items-center border-b-[3px] border-[#555] bg-[#f0f0f0] text-[28.3px] text-[#3a3a3a]">
          <div className="w-[100px] h-full shrink-0 pl-[4px] flex items-center border-r-2 border-[#444]">55(91)</div>
          <div className="ml-[23px] w-[1817px] shrink-0 whitespace-nowrap">Trace: /Q; Context: /home/IC/simulation/test/spectre/schematic/psf; Dataset: tran-tran</div>
          <div className="w-[22px] h-[40px] bg-[#9a9aa2] border-2 border-[#d0d0d0] border-r-[#555] border-b-[#555] shrink-0" />
        </div>

        {/* taskbar */}
        <div className="flex-1 flex items-start pt-[10px] bg-[#e9e9e9] text-[31px]">
          <TaskBtn cls="ml-[14px] w-[71px] justify-center">
            <svg viewBox="0 0 36 36" className="w-[36px] h-[36px]">
              <rect x="16" y="3" width="18" height="18" fill="#333" />
              <rect x="21" y="8" width="8" height="8" fill="#f0f0f0" />
              <path d="M3 19 H11 M3 19 V33 H15 V27" fill="none" stroke="#333" strokeWidth="5" />
            </svg>
          </TaskBtn>
          <TaskBtn cls="ml-[15px] w-[168px] pl-[18px]">
            <svg viewBox="0 0 52 48" className="w-[52px] h-[48px] shrink-0">
              <rect width="52" height="48" fill="#2f3a34" stroke="#999" strokeWidth="3" />
              <path d="M9 9 L15 13 L9 17 M18 24 H24" fill="none" stroke="#ddd" strokeWidth="2" />
            </svg>
            <span className="ml-[14px]">IC...</span>
          </TaskBtn>
          <TaskBtn cls="ml-[13px] w-[170px] pl-[14px]">
            <CDoc />
            <span className="ml-[10px]">Vir...</span>
          </TaskBtn>
          <TaskBtn cls="ml-[12px] w-[170px] pl-[15px]">
            <svg viewBox="0 0 59 60" className="w-[59px] h-[60px] shrink-0">
              <rect width="59" height="60" fill="#5a5a5a" />
              <path d="M0 8 L20 28 L36 48 M14 0 L40 26 M42 0 L8 36 L28 60 M59 22 L34 44 L20 56" fill="none" stroke="#d8d8d8" strokeWidth="2.5" />
              <path d="M4 4 L28 30" stroke="#111" strokeWidth="6" />
            </svg>
            <span className="ml-[9px]">Vir...</span>
          </TaskBtn>
          <TaskBtn cls="ml-[12px] w-[171px] pl-[30px]">
            <div className="w-[32px] shrink-0 flex flex-col items-center text-[10px] leading-[14px] font-bold text-[#444] font-['Liberation_Mono',monospace]">
              <span>ADC</span>
              <span>L</span>
              <span>:10)</span>
            </div>
            <span className="ml-[23px]">AD...</span>
          </TaskBtn>
          <TaskBtn cls="ml-[12px] w-[168px] pl-[16px]">
            <CDoc light />
            <span className="ml-[11px] text-[#a8a8a8]">[/h...</span>
          </TaskBtn>
          <TaskBtn active cls="ml-[13px] w-[169px] pl-[17px]">
            <WaveTask />
            <span className="ml-[13px]">Vir...</span>
          </TaskBtn>
          <TaskBtn cls="ml-[11px] w-[168px] pl-[17px]">
            <WaveTask light />
            <span className="ml-[15px] text-[#a8a8a8]">[Vi...</span>
          </TaskBtn>
          <div className="ml-[33px] mt-[4px] w-[130px] h-[66px] shrink-0 bg-[#f5f5f3] border-[5px] border-t-[8px] border-[#8a8a8a]" />
          <div className="ml-[10px] mt-[4px] w-[132px] h-[66px] shrink-0 bg-[#dcdcdc] border border-[#d0d0d0] rounded-sm" />
          <div className="ml-[8px] mt-[4px] w-[133px] h-[66px] shrink-0 bg-[#dcdcdc] border border-[#d0d0d0] rounded-sm" />
          <div className="ml-[8px] mt-[4px] w-[132px] h-[66px] shrink-0 bg-[#dcdcdc] border border-[#d0d0d0] rounded-r-lg" />
        </div>
      </div>
    </div>
  );
}
